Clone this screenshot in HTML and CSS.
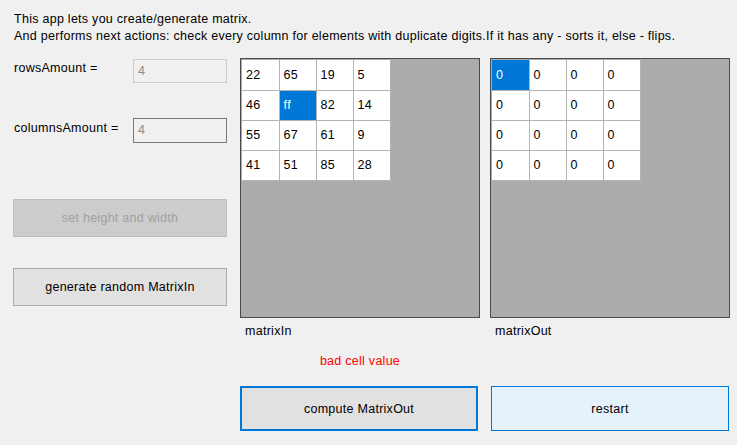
FILE: index.html
```html
<!DOCTYPE html>
<html>
<head>
<meta charset="utf-8">
<link rel="stylesheet" href="styles.css">
</head>
<body>
<div class="app">
  <div class="intro">
    <div>This app lets you create/generate matrix.</div>
    <div>And performs next actions: check every column for elements with duplicate digits.If it has any - sorts it, else - flips.</div>
  </div>
  <div class="main">
    <div class="side">
      <div class="field">
        <span class="lbl">rowsAmount =</span>
        <div class="tb tb-disabled">4</div>
      </div>
      <div class="field field2">
        <span class="lbl">columnsAmount =</span>
        <div class="tb tb-readonly">4</div>
      </div>
      <div class="btn btn-disabled btn-set">set height and width</div>
      <div class="btn btn-gen">generate random MatrixIn</div>
    </div>
    <div class="col">
      <div class="gridbox">
        <table class="cells">
          <tr><td>22</td><td>65</td><td>19</td><td>5</td></tr>
          <tr><td>46</td><td class="sel">ff</td><td>82</td><td>14</td></tr>
          <tr><td>55</td><td>67</td><td>61</td><td>9</td></tr>
          <tr><td>41</td><td>51</td><td>85</td><td>28</td></tr>
        </table>
      </div>
      <div class="cap">matrixIn</div>
      <div class="err">bad cell value</div>
      <div class="btn btn-compute">compute MatrixOut</div>
    </div>
    <div class="col">
      <div class="gridbox">
        <table class="cells">
          <tr><td class="sel">0</td><td>0</td><td>0</td><td>0</td></tr>
          <tr><td>0</td><td>0</td><td>0</td><td>0</td></tr>
          <tr><td>0</td><td>0</td><td>0</td><td>0</td></tr>
          <tr><td>0</td><td>0</td><td>0</td><td>0</td></tr>
        </table>
      </div>
      <div class="cap">matrixOut</div>
      <div class="err"></div>
      <div class="btn btn-restart">restart</div>
    </div>
  </div>
</div>
</body>
</html>
```
FILE: styles.css
```css
html, body {
  margin: 0;
  padding: 0;
  background: #f0f0f0;
}
body {
  font-family: "Liberation Sans", Arial, sans-serif;
  font-size: 12.5px;
  letter-spacing: 0.27px;
  color: #000;
  width: 737px;
  height: 445px;
  overflow: hidden;
}
.intro {
  padding: 11px 0 0 14px;
  line-height: 17px;
  height: 47px;
  box-sizing: border-box;
}
.main {
  display: flex;
  padding-left: 13px;
  margin-top: 11px;
}
.main > * {
  flex-shrink: 0;
}
.side {
  width: 214px;
  margin-right: 13px;
  display: flex;
  flex-direction: column;
}
.field {
  display: flex;
  justify-content: space-between;
  align-items: flex-start;
  height: 24px;
}
.field .lbl {
  padding-left: 1px;
  padding-top: 3px;
}
.field2 {
  margin-top: 36px;
}
.tb {
  width: 94px;
  height: 24px;
  box-sizing: border-box;
  padding: 4px 0 0 4px;
  color: #8a8a8a;
  background: #f0f0f0;
}
.tb-disabled {
  border: 1px solid #cccccc;
  margin-top: 1px;
}
.tb-readonly {
  border: 1px solid #7a7a7a;
  height: 25px;
}
.btn {
  box-sizing: border-box;
  display: flex;
  align-items: center;
  justify-content: center;
  background: #e1e1e1;
  border: 1px solid #adadad;
}
.btn-set {
  margin-top: 57px;
  height: 38px;
  background: #cccccc;
  border-color: #bfbfbf;
  color: #a0a0a0;
}
.btn-gen {
  margin-top: 31px;
  height: 38px;
}
.col {
  width: 240px;
  display: flex;
  flex-direction: column;
}
.col + .col {
  margin-left: 10px;
}
.gridbox {
  height: 260px;
  box-sizing: border-box;
  border: 1px solid #4a4a4a;
  background: #ababab;
  padding: 1px;
}
.cells {
  border-collapse: collapse;
  letter-spacing: 0.4px;
}
.cells td {
  width: 37px;
  height: 30px;
  padding: 0 0 0 4px;
  box-sizing: border-box;
  background: #fff;
  border: 1px solid #b4b4b4;
  border-top: none;
  border-left: none;
  vertical-align: middle;
}
.cells td.sel {
  background: #0078d7;
  color: #fff;
}
.cap {
  height: 28px;
  padding: 6px 0 0 5px;
  box-sizing: border-box;
}
.err {
  height: 40px;
  color: #ff0000;
  text-align: center;
  padding-top: 8px;
  box-sizing: border-box;
}
.btn-compute {
  height: 45px;
  border: 2px solid #0078d7;
  width: 238px;
}
.btn-restart {
  height: 45px;
  margin-left: 1px;
  width: 238px;
  background: #e5f1fb;
  border-color: #0078d7;
}
```
